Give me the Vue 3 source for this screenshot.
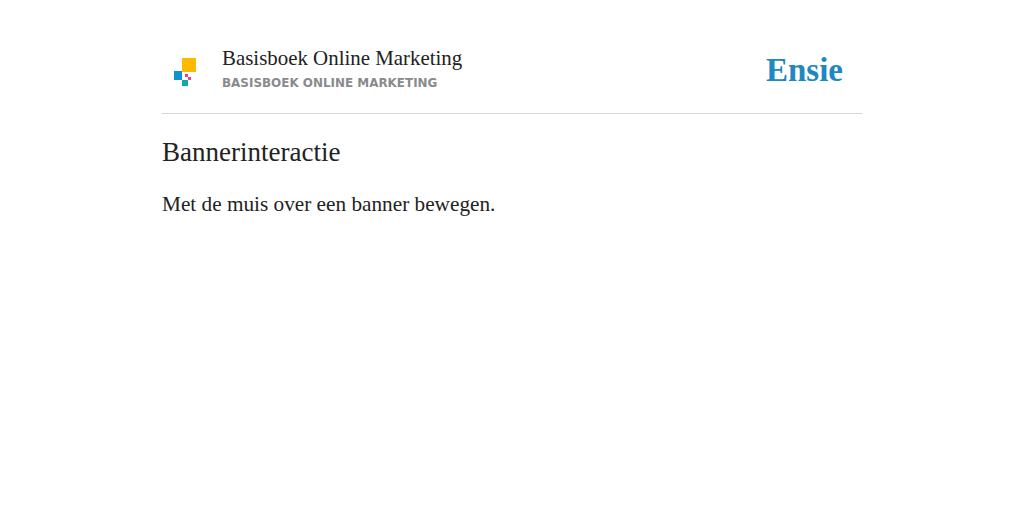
<script setup>
const title = 'Basisboek Online Marketing'
</script>

<template>
  <div class="page">
    <header class="head">
      <svg class="logo" width="36" height="36" viewBox="0 0 36 36">
        <rect x="20" y="0" width="14" height="14" fill="#fdbb00" />
        <rect x="12" y="13" width="8" height="9" fill="#0d94cf" />
        <rect x="20" y="22" width="6" height="6" fill="#12a8a8" />
        <rect x="23" y="16" width="3" height="3" fill="#ef3f8f" />
        <rect x="26" y="19" width="3" height="3" fill="#ef3f8f" />
      </svg>
      <div class="titles">
        <div class="title">{{ title }}</div>
        <div class="sub">BASISBOEK ONLINE MARKETING</div>
      </div>
      <div class="brand">Ensie</div>
    </header>
    <h1 class="heading">Bannerinteractie</h1>
    <p class="text">Met de muis over een banner bewegen.</p>
  </div>
</template>

<style scoped>
.page {
  width: 700px;
  margin: 0 auto;
  padding-top: 42px;
  color: #222;
  font-family: "Liberation Serif", serif;
}
.head {
  display: flex;
  align-items: center;
  height: 72px;
  box-sizing: border-box;
  padding-bottom: 15px;
  border-bottom: 1px solid #d9d9d9;
}
.logo { margin-right: 24px; flex: none; margin-top: 11px; }
.titles { flex: 1; margin-top: -2px; }
.title { font-size: 20.9px; line-height: 27px; margin-bottom: 2px; }
.sub {
  font-family: "DejaVu Sans", sans-serif;
  font-size: 11.95px;
  font-weight: 700;
  line-height: 19px;
  color: #8a8a8e;
}
.brand {
  font-size: 33px;
  font-weight: 700;
  color: #1e88c0;
  margin-right: 19px;
  line-height: 40px;
}
.heading {
  margin: 21px 0 0;
  font-size: 27px;
  font-weight: 400;
  line-height: 34px;
}
.text {
  margin: 20px 0 0;
  font-size: 21.25px;
  line-height: 30px;
}
</style>
